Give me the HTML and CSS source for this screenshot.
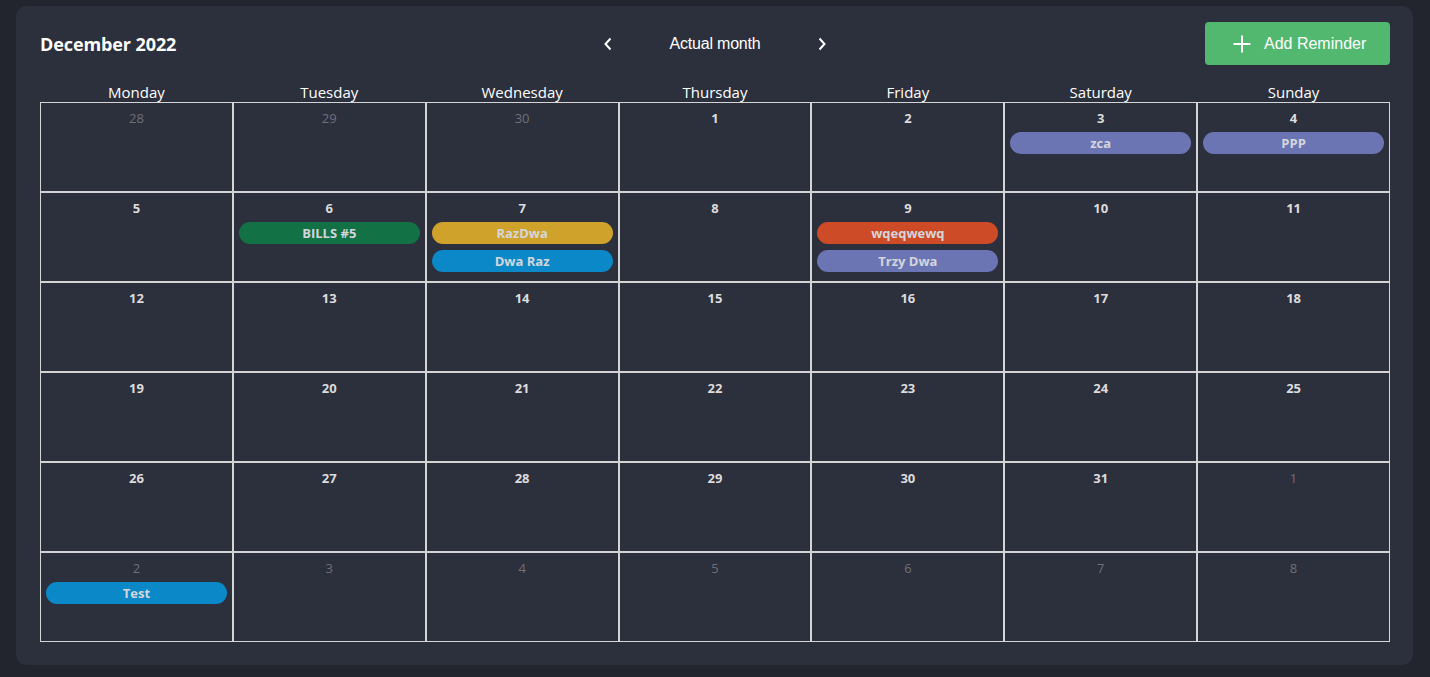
FILE: index.html
```html
<!DOCTYPE html>
<html lang="en">
<head>
<meta charset="utf-8">
<title>Calendar</title>
<link rel="stylesheet" href="styles.css">
</head>
<body>
<div class="card">
  <header class="header">
    <h1 class="title">December 2022</h1>
    <div class="nav">
      <button class="chev" aria-label="Previous month"><svg width="10" height="14" viewBox="0 0 10 14"><path d="M7.5 1.5 L2.5 7 L7.5 12.5" fill="none" stroke="#fff" stroke-width="2"/></svg></button>
      <span class="nav-label">Actual month</span>
      <button class="chev" aria-label="Next month"><svg width="10" height="14" viewBox="0 0 10 14"><path d="M2.5 1.5 L7.5 7 L2.5 12.5" fill="none" stroke="#fff" stroke-width="2"/></svg></button>
    </div>
    <div class="actions">
      <button class="add-btn"><svg width="18" height="18" viewBox="0 0 18 18"><path d="M9 0.5 V17.5 M0.5 9 H17.5" stroke="#fff" stroke-width="2"/></svg><span>Add Reminder</span></button>
    </div>
  </header>
  <div class="weekdays">
    <div>Monday</div><div>Tuesday</div><div>Wednesday</div><div>Thursday</div><div>Friday</div><div>Saturday</div><div>Sunday</div>
  </div>
  <div class="grid">
    <div class="cell"><div class="num other">28</div></div>
    <div class="cell"><div class="num other">29</div></div>
    <div class="cell"><div class="num other">30</div></div>
    <div class="cell"><div class="num">1</div></div>
    <div class="cell"><div class="num">2</div></div>
    <div class="cell"><div class="num">3</div><div class="ev purple">zca</div></div>
    <div class="cell"><div class="num">4</div><div class="ev purple">PPP</div></div>

    <div class="cell"><div class="num">5</div></div>
    <div class="cell"><div class="num">6</div><div class="ev green">BILLS #5</div></div>
    <div class="cell"><div class="num">7</div><div class="ev gold">RazDwa</div><div class="ev blue">Dwa Raz</div></div>
    <div class="cell"><div class="num">8</div></div>
    <div class="cell"><div class="num">9</div><div class="ev red">wqeqwewq</div><div class="ev purple">Trzy Dwa</div></div>
    <div class="cell"><div class="num">10</div></div>
    <div class="cell"><div class="num">11</div></div>

    <div class="cell"><div class="num">12</div></div>
    <div class="cell"><div class="num">13</div></div>
    <div class="cell"><div class="num">14</div></div>
    <div class="cell"><div class="num">15</div></div>
    <div class="cell"><div class="num">16</div></div>
    <div class="cell"><div class="num">17</div></div>
    <div class="cell"><div class="num">18</div></div>

    <div class="cell"><div class="num">19</div></div>
    <div class="cell"><div class="num">20</div></div>
    <div class="cell"><div class="num">21</div></div>
    <div class="cell"><div class="num">22</div></div>
    <div class="cell"><div class="num">23</div></div>
    <div class="cell"><div class="num">24</div></div>
    <div class="cell"><div class="num">25</div></div>

    <div class="cell"><div class="num">26</div></div>
    <div class="cell"><div class="num">27</div></div>
    <div class="cell"><div class="num">28</div></div>
    <div class="cell"><div class="num">29</div></div>
    <div class="cell"><div class="num">30</div></div>
    <div class="cell"><div class="num">31</div></div>
    <div class="cell"><div class="num other">1</div></div>

    <div class="cell"><div class="num other">2</div><div class="ev blue">Test</div></div>
    <div class="cell"><div class="num other">3</div></div>
    <div class="cell"><div class="num other">4</div></div>
    <div class="cell"><div class="num other">5</div></div>
    <div class="cell"><div class="num other">6</div></div>
    <div class="cell"><div class="num other">7</div></div>
    <div class="cell"><div class="num other">8</div></div>
  </div>
</div>
</body>
</html>
```

FILE: styles.css
```css
* { box-sizing: border-box; }
html, body { margin: 0; }
body {
  background: #22242e;
  font-family: "Open Sans", "Noto Sans", sans-serif;
  color: #fff;
  padding: 6px 17px 0 16px;
  height: 677px;
  overflow: hidden;
}
.card {
  background: #2c2f3c;
  border-radius: 10px;
  padding: 16px 23px 23px 24px;
  width: 1397px;
}
.header {
  display: grid;
  grid-template-columns: 1fr auto 1fr;
  align-items: center;
  height: 43px;
}
.title {
  margin: 0;
  font-size: 18px;
  font-weight: 700;
  letter-spacing: -0.1px;
}
.nav {
  display: flex;
  align-items: center;
  gap: 57px;
  margin-top: 1px;
}
.nav-label {
  font-family: "Liberation Sans", "Open Sans", sans-serif;
  font-size: 16px;
  letter-spacing: -0.2px;
}
.chev {
  background: none;
  border: 0;
  padding: 0;
  width: 10px;
  height: 14px;
  display: flex;
}
.actions { display: flex; justify-content: flex-end; }
.add-btn {
  display: flex;
  align-items: center;
  gap: 13px;
  height: 43px;
  width: 185px;
  padding: 0 0 0 28px;
  background: #52b86f;
  border: 0;
  border-radius: 4px;
  color: #fff;
  font-family: "Liberation Sans", "Open Sans", sans-serif;
  font-size: 16px;
}
.weekdays {
  display: grid;
  grid-template-columns: repeat(7, 1fr);
  margin-top: 17px;
  height: 20px;
  text-align: center;
  font-size: 15px;
  line-height: 21px;
}
.grid {
  display: grid;
  grid-template-columns: repeat(7, 1fr);
  grid-auto-rows: 90px;
}
.cell {
  border: 1px solid #d4d4d4;
  padding: 6px 5px 0;
  display: flex;
  flex-direction: column;
  gap: 6px;
}
.num {
  text-align: center;
  font-size: 13px;
  font-weight: 700;
  line-height: 18px;
  color: #dcdcdc;
  margin-bottom: -1px;
}
.num.other {
  font-weight: 400;
  color: #6f7079;
}
.ev {
  height: 22px;
  border-radius: 11px;
  text-align: center;
  font-size: 13px;
  font-weight: 700;
  line-height: 23px;
  color: #d4d6dc;
}
.purple { background: #6b75b3; }
.green { background: #127145; }
.gold { background: #cfa22b; }
.blue { background: #0b88c7; }
.red { background: #cd4b26; }
```
